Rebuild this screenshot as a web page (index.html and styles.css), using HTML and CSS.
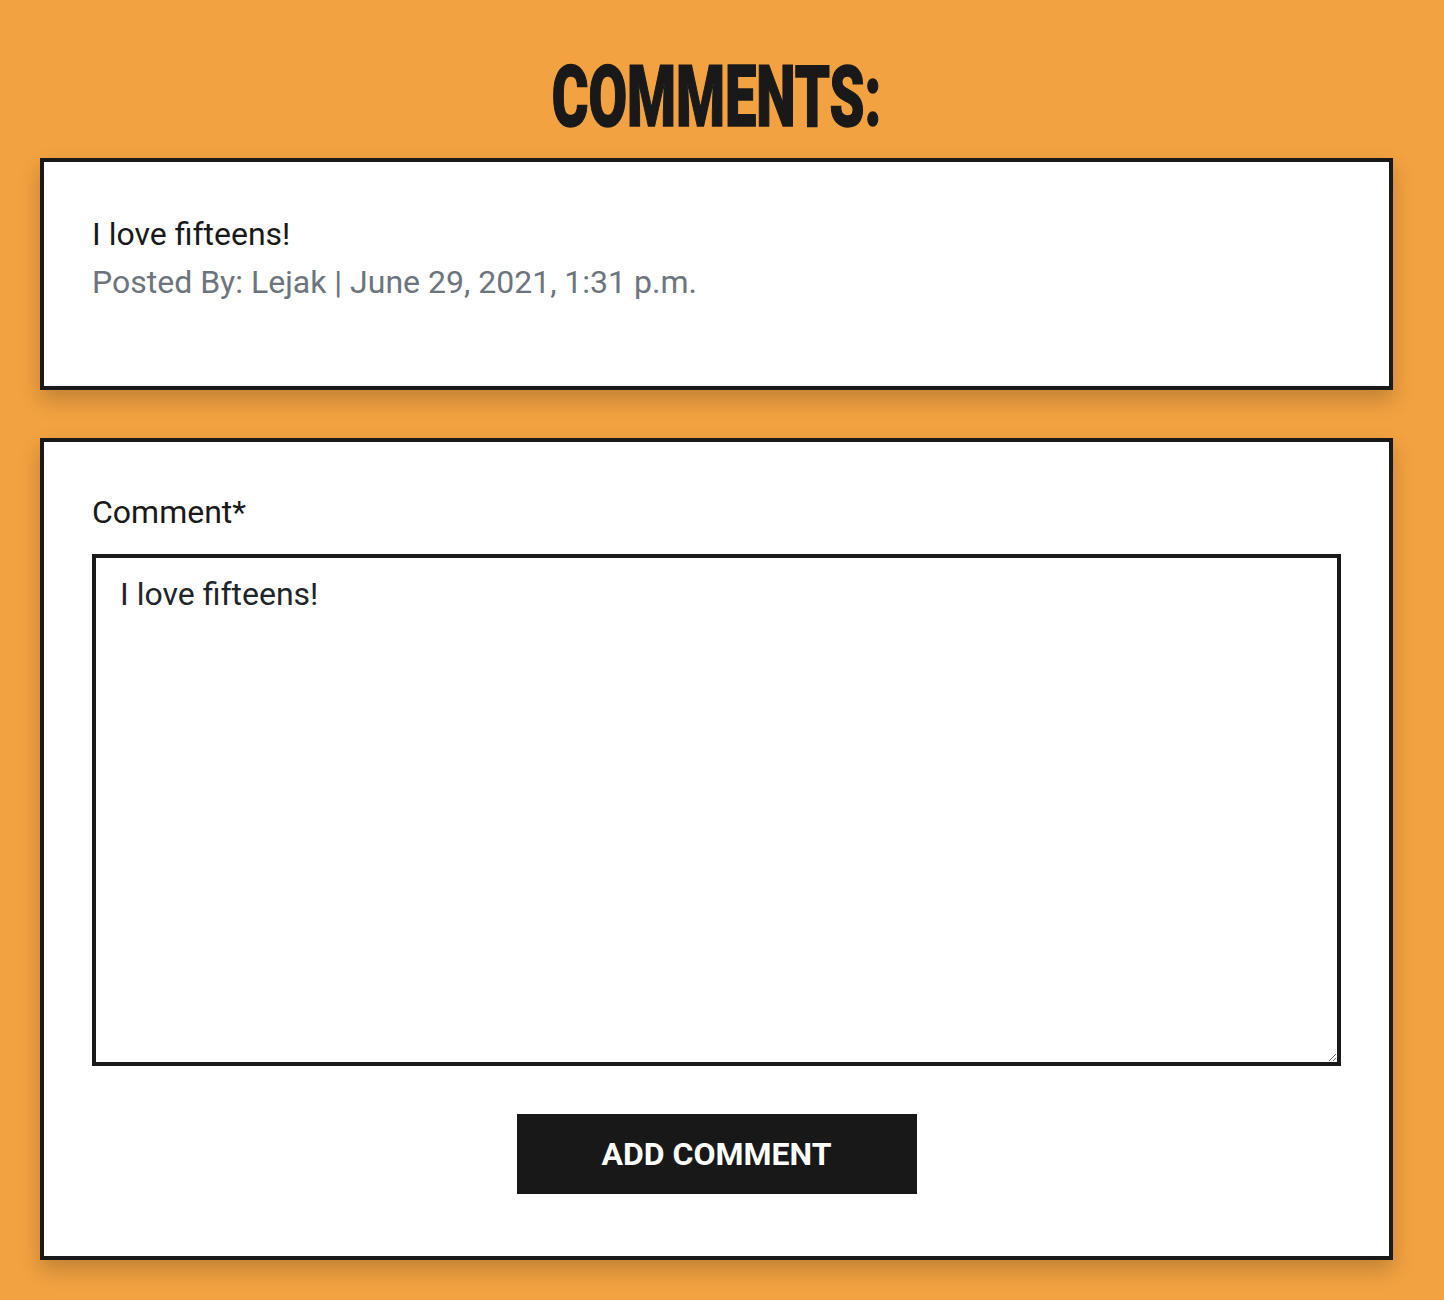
FILE: index.html
```html
<!DOCTYPE html>
<html lang="en">
<head>
<meta charset="utf-8">
<title>Comments</title>
<link rel="stylesheet" href="styles.css">
</head>
<body>
<main class="wrap">
  <h2 class="heading"><span class="heading-text">COMMENTS:</span></h2>
  <section class="card">
    <p class="comment-body">I love fifteens!</p>
    <p class="comment-meta">Posted By: Lejak | June 29, 2021, 1:31 p.m.</p>
  </section>
  <section class="card form-card">
    <form class="comment-form">
      <label class="label" for="id_body">Comment*</label>
      <textarea id="id_body" class="textarea">I love fifteens!</textarea>
      <div class="actions">
        <button type="button" class="btn">ADD COMMENT</button>
      </div>
    </form>
  </section>
</main>
</body>
</html>
```

FILE: styles.css
```css
html, body {
  margin: 0;
  padding: 0;
}
body {
  background: #f2a241;
  font-family: Roboto, "Liberation Sans", sans-serif;
  color: #191919;
  min-height: 1300px;
}
.wrap {
  width: 1353px;
  margin-left: 40px;
  display: flex;
  flex-direction: column;
  gap: 48px;
  padding-top: 54px;
}
.heading {
  margin: 0 0 -32px 0;
  text-align: center;
  line-height: 1;
  font-size: 86px;
  font-weight: 900;
  height: 88px;
}
.heading-text {
  display: inline-block;
  transform: scaleX(0.65);
  -webkit-text-stroke: 1.5px #191919;
}
.card {
  background: #fff;
  border: 4px solid #191919;
  box-shadow: 0 10px 20px rgba(0, 0, 0, 0.2);
  padding: 48px;
}
.comment-body {
  margin: 0;
  font-size: 32px;
  line-height: 48px;
}
.comment-meta {
  margin: 0 0 32px 0;
  font-size: 32px;
  line-height: 48px;
  color: #6c757d;
}
.comment-form {
  display: flex;
  flex-direction: column;
}
.label {
  font-size: 32px;
  line-height: 44px;
  margin-bottom: 20px;
}
.textarea {
  box-sizing: border-box;
  width: 100%;
  height: 512px;
  border: 4px solid #191919;
  border-radius: 0;
  padding: 12px 24px;
  font-family: Roboto, "Liberation Sans", sans-serif;
  font-size: 32px;
  line-height: 48px;
  color: #212529;
  resize: vertical;
  outline: none;
}
.actions {
  display: flex;
  justify-content: center;
  margin-top: 48px;
  margin-bottom: 14px;
}
.btn {
  width: 400px;
  height: 80px;
  background: #181818;
  color: #fff;
  border: none;
  border-radius: 0;
  font-family: Roboto, "Liberation Sans", sans-serif;
  font-weight: 700;
  font-size: 32px;
}
```
